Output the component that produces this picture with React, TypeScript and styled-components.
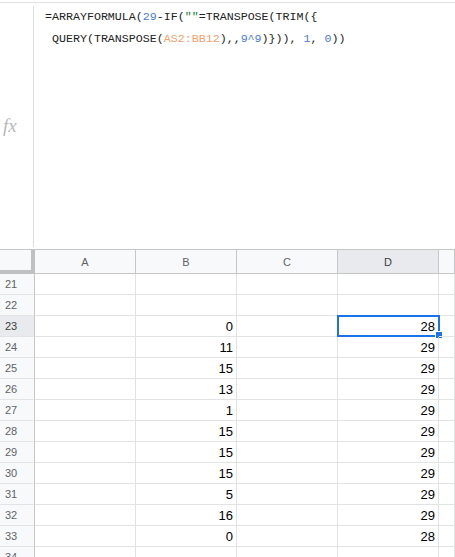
import React from "react";
import styled, { createGlobalStyle, css } from "styled-components";

const GlobalStyle = createGlobalStyle`
  html, body {
    margin: 0;
    padding: 0;
    background: #ffffff;
    overflow: hidden;
  }
  body {
    font-family: "Liberation Sans", Arial, sans-serif;
  }
`;

const Page = styled.div`
  width: 455px;
  height: 557px;
  overflow: hidden;
  padding-top: 2px;
  box-sizing: border-box;
`;

const FormulaBar = styled.div`
  display: flex;
  height: 247px;
  border-top: 1px solid #e0e0e0;
  box-sizing: border-box;
`;

const FxLabel = styled.div`
  width: 33px;
  display: flex;
  align-items: center;
  padding-left: 3px;
  box-sizing: border-box;
  font-family: "Liberation Serif", "Times New Roman", serif;
  font-style: italic;
  font-size: 19px;
  color: #b8b8b8;
`;

const Divider = styled.div`
  width: 1px;
  margin: 3px 0 2px;
  background: #dadce0;
`;

const FormulaText = styled.div`
  padding: 3px 0 0 11px;
  font-family: "Liberation Mono", "Courier New", monospace;
  font-size: 11.65px;
  line-height: 21.5px;
  color: #222222;
  white-space: pre;
`;

const Token = styled.span<{ kind: "num" | "range" | "str" }>`
  color: ${(p) =>
    p.kind === "num" ? "#4a7bd6" : p.kind === "range" ? "#f2a06a" : "#188038"};
`;

const Grid = styled.div`
  display: grid;
  grid-template-columns: 35px repeat(4, 101px) 1fr;
  grid-template-rows: 25px;
  grid-auto-rows: 21px;
`;

const headerCell = css`
  box-sizing: border-box;
  background: #f8f9fa;
  border-top: 1px solid #c4c7c5;
  border-bottom: 1px solid #c4c7c5;
  border-right: 1px solid #c4c7c5;
`;

const Corner = styled.div`
  ${headerCell};
  border-right: 4px solid #c0c0c0;
  border-bottom: 4px solid #c0c0c0;
`;

const ColHead = styled.div<{ active?: boolean }>`
  ${headerCell};
  display: flex;
  align-items: center;
  justify-content: center;
  font-size: 11px;
  color: ${(p) => (p.active ? "#3c4043" : "#5f6368")};
  background: ${(p) => (p.active ? "#e8eaed" : "#f8f9fa")};
`;

const RowHead = styled.div<{ active?: boolean }>`
  box-sizing: border-box;
  display: flex;
  align-items: center;
  padding-left: 5px;
  font-size: 11px;
  color: ${(p) => (p.active ? "#3c4043" : "#5f6368")};
  background: ${(p) => (p.active ? "#e8eaed" : "#f8f9fa")};
  border-right: 1px solid #c4c7c5;
  border-bottom: 1px solid #e2e3e3;
`;

const Cell = styled.div`
  position: relative;
  box-sizing: border-box;
  display: flex;
  align-items: flex-end;
  justify-content: flex-end;
  padding: 0 3px 2px 0;
  font-size: 13px;
  line-height: 15px;
  color: #000000;
  border-right: 1px solid #e2e3e3;
  border-bottom: 1px solid #e2e3e3;
`;

const Selection = styled.div`
  position: absolute;
  left: -1px;
  top: -1px;
  right: -2px;
  bottom: -1px;
  border: 2px solid #1a73e8;
  pointer-events: none;
`;

const FillHandle = styled.div`
  position: absolute;
  right: -5px;
  bottom: -4px;
  width: 6px;
  height: 6px;
  background: #1a73e8;
  border: 1px solid #ffffff;
`;

const columns = ["A", "B", "C", "D"];

const rows: { n: number; b: string; d: string }[] = [
  { n: 21, b: "", d: "" },
  { n: 22, b: "", d: "" },
  { n: 23, b: "0", d: "28" },
  { n: 24, b: "11", d: "29" },
  { n: 25, b: "15", d: "29" },
  { n: 26, b: "13", d: "29" },
  { n: 27, b: "1", d: "29" },
  { n: 28, b: "15", d: "29" },
  { n: 29, b: "15", d: "29" },
  { n: 30, b: "15", d: "29" },
  { n: 31, b: "5", d: "29" },
  { n: 32, b: "16", d: "29" },
  { n: 33, b: "0", d: "28" },
  { n: 34, b: "", d: "" },
];

const ACTIVE_ROW = 23;

export default function App() {
  return (
    <Page>
      <GlobalStyle />
      <FormulaBar>
        <FxLabel>fx</FxLabel>
        <Divider />
        <FormulaText>
          {"=ARRAYFORMULA("}
          <Token kind="num">29</Token>
          {"-IF("}
          <Token kind="str">""</Token>
          {"=TRANSPOSE(TRIM({\n QUERY(TRANSPOSE("}
          <Token kind="range">AS2:BB12</Token>
          {"),,"}
          <Token kind="num">9^9</Token>
          {")})), "}
          <Token kind="num">1</Token>
          {", "}
          <Token kind="num">0</Token>
          {"))"}
        </FormulaText>
      </FormulaBar>
      <Grid>
        <Corner />
        {columns.map((c) => (
          <ColHead key={c} active={c === "D"}>
            {c}
          </ColHead>
        ))}
        <ColHead />
        {rows.map((r) => (
          <React.Fragment key={r.n}>
            <RowHead active={r.n === ACTIVE_ROW}>{r.n}</RowHead>
            <Cell />
            <Cell>{r.b}</Cell>
            <Cell />
            <Cell>
              {r.d}
              {r.n === ACTIVE_ROW && (
                <Selection>
                  <FillHandle />
                </Selection>
              )}
            </Cell>
            <Cell />
          </React.Fragment>
        ))}
      </Grid>
    </Page>
  );
}
